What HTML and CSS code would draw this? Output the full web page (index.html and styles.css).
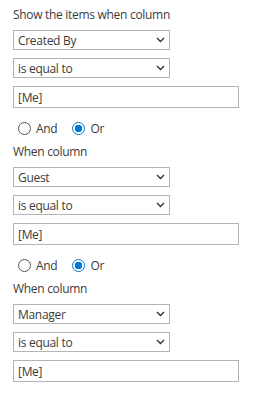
FILE: index.html
```html
<!DOCTYPE html>
<html>
<head>
<meta charset="utf-8">
<link rel="stylesheet" href="styles.css">
</head>
<body>
<div class="panel">
  <div class="block">
    <div class="label">Show the items when column</div>
    <div class="select"><span>Created By</span><svg class="chev" width="9" height="6" viewBox="0 0 9 6"><path d="M1 1 L4.5 4.5 L8 1" fill="none" stroke="#333" stroke-width="1.4"/></svg></div>
    <div class="select"><span>is equal to</span><svg class="chev" width="9" height="6" viewBox="0 0 9 6"><path d="M1 1 L4.5 4.5 L8 1" fill="none" stroke="#333" stroke-width="1.4"/></svg></div>
    <input class="text" type="text" value="[Me]">
    <div class="radios">
      <span class="radio"><span class="dot"></span>And</span>
      <span class="radio on"><span class="dot"></span>Or</span>
    </div>
  </div>
  <div class="block">
    <div class="label">When column</div>
    <div class="select"><span>Guest</span><svg class="chev" width="9" height="6" viewBox="0 0 9 6"><path d="M1 1 L4.5 4.5 L8 1" fill="none" stroke="#333" stroke-width="1.4"/></svg></div>
    <div class="select"><span>is equal to</span><svg class="chev" width="9" height="6" viewBox="0 0 9 6"><path d="M1 1 L4.5 4.5 L8 1" fill="none" stroke="#333" stroke-width="1.4"/></svg></div>
    <input class="text" type="text" value="[Me]">
    <div class="radios">
      <span class="radio"><span class="dot"></span>And</span>
      <span class="radio on"><span class="dot"></span>Or</span>
    </div>
  </div>
  <div class="block">
    <div class="label">When column</div>
    <div class="select"><span>Manager</span><svg class="chev" width="9" height="6" viewBox="0 0 9 6"><path d="M1 1 L4.5 4.5 L8 1" fill="none" stroke="#333" stroke-width="1.4"/></svg></div>
    <div class="select"><span>is equal to</span><svg class="chev" width="9" height="6" viewBox="0 0 9 6"><path d="M1 1 L4.5 4.5 L8 1" fill="none" stroke="#333" stroke-width="1.4"/></svg></div>
    <input class="text" type="text" value="[Me]">
  </div>
</div>
</body>
</html>
```
FILE: styles.css
```css
html, body {
  margin: 0;
  padding: 0;
  background: #fff;
}
body {
  font-family: "Open Sans", "Noto Sans", sans-serif;
  font-size: 12px;
  color: #3b3b3b;
  letter-spacing: -0.3px;
}
.panel {
  padding: 6px 13px 0 13px;
}
.block {
  display: flex;
  flex-direction: column;
  align-items: flex-start;
  margin-bottom: 5px;
}
.label {
  line-height: 18px;
  height: 18px;
  margin-bottom: 6px;
}
.select {
  box-sizing: border-box;
  width: 157px;
  height: 20px;
  border: 1px solid #b4b4b4;
  display: flex;
  align-items: center;
  justify-content: space-between;
  padding: 0 4px 0 4px;
  margin-bottom: 8px;
}
.chev {
  display: block;
}
.text {
  box-sizing: border-box;
  width: 226px;
  height: 22px;
  border: 1px solid #b4b4b4;
  margin: 0;
  padding: 0 4px;
  font: inherit;
  letter-spacing: -0.3px;
  color: #3b3b3b;
  outline: none;
}
.radios {
  display: flex;
  gap: 15px;
  height: 20px;
  align-items: center;
  margin-top: 10px;
  padding-left: 5px;
}
.radio {
  display: flex;
  align-items: center;
  gap: 5px;
}
.dot {
  box-sizing: border-box;
  width: 13px;
  height: 13px;
  border: 1px solid #555;
  border-radius: 50%;
  display: inline-block;
}
.on .dot {
  border: 1.5px solid #0078d4;
  background: radial-gradient(circle, #0078d4 0 3.5px, #fff 4px);
}
```
